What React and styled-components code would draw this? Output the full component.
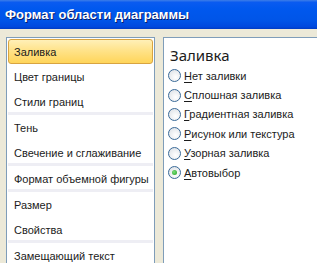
import React from "react";
import styled, { createGlobalStyle } from "styled-components";

const GlobalStyle = createGlobalStyle`
  html, body {
    margin: 0;
    padding: 0;
    background: #ece9d8;
    overflow: hidden;
  }
`;

const Window = styled.div`
  width: 317px;
  height: 263px;
  display: flex;
  flex-direction: column;
  background: #ece9d8;
  overflow: hidden;
`;

const TitleBar = styled.div`
  height: 29px;
  flex: none;
  display: flex;
  align-items: center;
  padding: 0 0 0 5px;
  box-sizing: border-box;
  background: linear-gradient(
    to bottom,
    #3d7ee8 0%,
    #0a5bf0 8%,
    #0058ee 30%,
    #0055e8 70%,
    #0049de 92%,
    #003cc4 100%
  );
  color: #fff;
  font-family: "Liberation Sans", Arial, sans-serif;
  font-weight: bold;
  font-size: 13px;
  text-shadow: 1px 1px 0 #0a1e6a;
`;

const Body = styled.div`
  flex: 1;
  display: flex;
  gap: 8px;
  padding: 8px 0 0 6px;
  min-height: 0;
`;

const NavPanel = styled.div`
  width: 149px;
  flex: none;
  background: #fff;
  border: 1px solid #7f9db9;
  border-bottom: none;
  box-sizing: border-box;
  padding: 1px 1px 0 1px;
  display: flex;
  flex-direction: column;
`;

const Group = styled.div`
  display: flex;
  flex-direction: column;

  & + & {
    border-top: 3px solid #eeeef4;
    margin-top: -2px;
  }
`;

const NavItem = styled.div`
  height: 25px;
  display: flex;
  align-items: center;
  padding-left: 5px;
  box-sizing: border-box;
  font-family: "Liberation Sans", Arial, sans-serif;
  font-size: 11px;
  color: #1b1b1b;
  white-space: nowrap;
  border-radius: 3px;
  border: 1px solid ${(p) => (p.$active ? "#d8a441" : "transparent")};
  background: ${(p) =>
    p.$active
      ? "linear-gradient(to bottom, #fff0b8 0%, #ffe38a 45%, #ffd55a 100%)"
      : "transparent"};
`;

const ContentPanel = styled.div`
  flex: 1;
  background: #fff;
  border: 1px solid #7f9db9;
  border-right: none;
  border-bottom: none;
  box-sizing: border-box;
  padding: 5px 0 0 4px;
  display: flex;
  flex-direction: column;
`;

const Heading = styled.div`
  font-family: "Noto Sans", "Open Sans", sans-serif;
  font-size: 15px;
  color: #1b1b1b;
  height: 23px;
  padding-left: 2px;
  display: flex;
  align-items: center;
`;

const RadioList = styled.div`
  display: flex;
  flex-direction: column;
`;

const RadioRow = styled.label`
  height: 19.4px;
  display: flex;
  align-items: center;
  gap: 3px;
  font-family: "Liberation Sans", Arial, sans-serif;
  font-size: 11px;
  color: #1b1b1b;
  white-space: nowrap;

  u {
    text-decoration-thickness: 1px;
    text-underline-offset: 2px;
  }
`;

const RadioCircle = styled.span`
  width: 11px;
  height: 11px;
  flex: none;
  border-radius: 50%;
  border: 1px solid #3a6a98;
  background: radial-gradient(circle at 60% 65%, #ffffff 0%, #f0f2f4 40%, #d8dde3 100%);
  display: flex;
  align-items: center;
  justify-content: center;

  &::after {
    content: "";
    width: 5px;
    height: 5px;
    border-radius: 50%;
    background: ${(p) =>
      p.$checked ? "radial-gradient(circle at 40% 40%, #7be07b, #1f9e1f)" : "transparent"};
  }
`;

const navGroups = [
  ["Заливка", "Цвет границы", "Стили границ"],
  ["Тень", "Свечение и сглаживание"],
  ["Формат объемной фигуры"],
  ["Размер", "Свойства"],
  ["Замещающий текст"],
];

const options = [
  ["Н", "ет заливки"],
  ["С", "плошная заливка"],
  ["Г", "радиентная заливка"],
  ["Р", "исунок или текстура"],
  ["У", "зорная заливка"],
  ["А", "втовыбор"],
];

export default function App() {
  const active = "Заливка";
  const checked = 5;

  return (
    <Window>
      <GlobalStyle />
      <TitleBar>Формат области диаграммы</TitleBar>
      <Body>
        <NavPanel>
          {navGroups.map((group, gi) => (
            <Group key={gi}>
              {group.map((item) => (
                <NavItem key={item} $active={item === active}>
                  {item}
                </NavItem>
              ))}
            </Group>
          ))}
        </NavPanel>
        <ContentPanel>
          <Heading>Заливка</Heading>
          <RadioList>
            {options.map(([key, rest], i) => (
              <RadioRow key={i}>
                <RadioCircle $checked={i === checked} />
                <span>
                  <u>{key}</u>
                  {rest}
                </span>
              </RadioRow>
            ))}
          </RadioList>
        </ContentPanel>
      </Body>
    </Window>
  );
}
